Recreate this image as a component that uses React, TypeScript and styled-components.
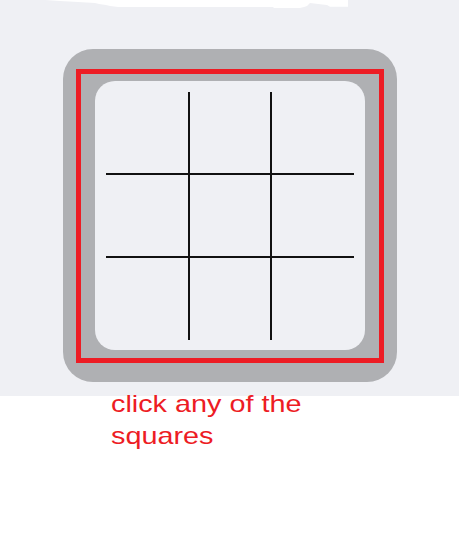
import React from "react";
import styled, { createGlobalStyle } from "styled-components";

const GlobalStyle = createGlobalStyle`
  html, body {
    margin: 0;
    padding: 0;
    background: #fff;
  }
  body {
    font-family: "Liberation Sans", Arial, sans-serif;
  }
`;

const Stage = styled.section`
  position: relative;
  height: 396px;
  box-sizing: border-box;
  padding: 49px 0 0 63px;
  background: #eff0f4;
`;

const Scrap = styled.svg`
  position: absolute;
  top: 0;
  left: 0;
`;

const Frame = styled.div`
  width: 334px;
  height: 333px;
  box-sizing: border-box;
  padding: 20px 13px 19px;
  border-radius: 30px;
  background: #afb0b3;
`;

const Outline = styled.div`
  height: 100%;
  box-sizing: border-box;
  padding: 7px 14px 8px;
  border: 5px solid #ed1c24;
`;

const Panel = styled.div`
  height: 100%;
  box-sizing: border-box;
  padding: 11px;
  border-radius: 20px;
  background: #eff0f4;
`;

const Board = styled.div`
  display: grid;
  grid-template-columns: 82px 80px 82px;
  grid-template-rows: 81px 81px 82px;
  gap: 2px;
  width: 248px;
  background: #111;
`;

const Square = styled.button`
  border: 0;
  padding: 0;
  margin: 0;
  background: #eff0f4;
  cursor: pointer;
`;

const Caption = styled.p`
  width: max-content;
  margin: -8px 0 0 111px;
  font-size: 24px;
  line-height: 32px;
  color: #ed1c24;
  transform: scaleX(1.2);
  transform-origin: left top;
`;

const scrapPoints =
  "45,0 60,1 78,2 95,3 99,4 106,5 110,6 118,7 183,7 273,7 274,8 300,8 304,7 307,6 309,4 310,3 318,4 327,5 330,6.7 348,6.7 348,0";

export default function App() {
  const squares = Array.from({ length: 9 }, (_, i) => i);

  return (
    <>
      <GlobalStyle />
      <Stage>
        <Scrap width="459" height="10" viewBox="0 0 459 10">
          <polygon points={scrapPoints} fill="#fff" />
        </Scrap>
        <Frame>
          <Outline>
            <Panel>
              <Board>
                {squares.map((i) => (
                  <Square key={i} aria-label={`square ${i + 1}`} />
                ))}
              </Board>
            </Panel>
          </Outline>
        </Frame>
      </Stage>
      <Caption>
        click any of the
        <br />
        squares
      </Caption>
    </>
  );
}
